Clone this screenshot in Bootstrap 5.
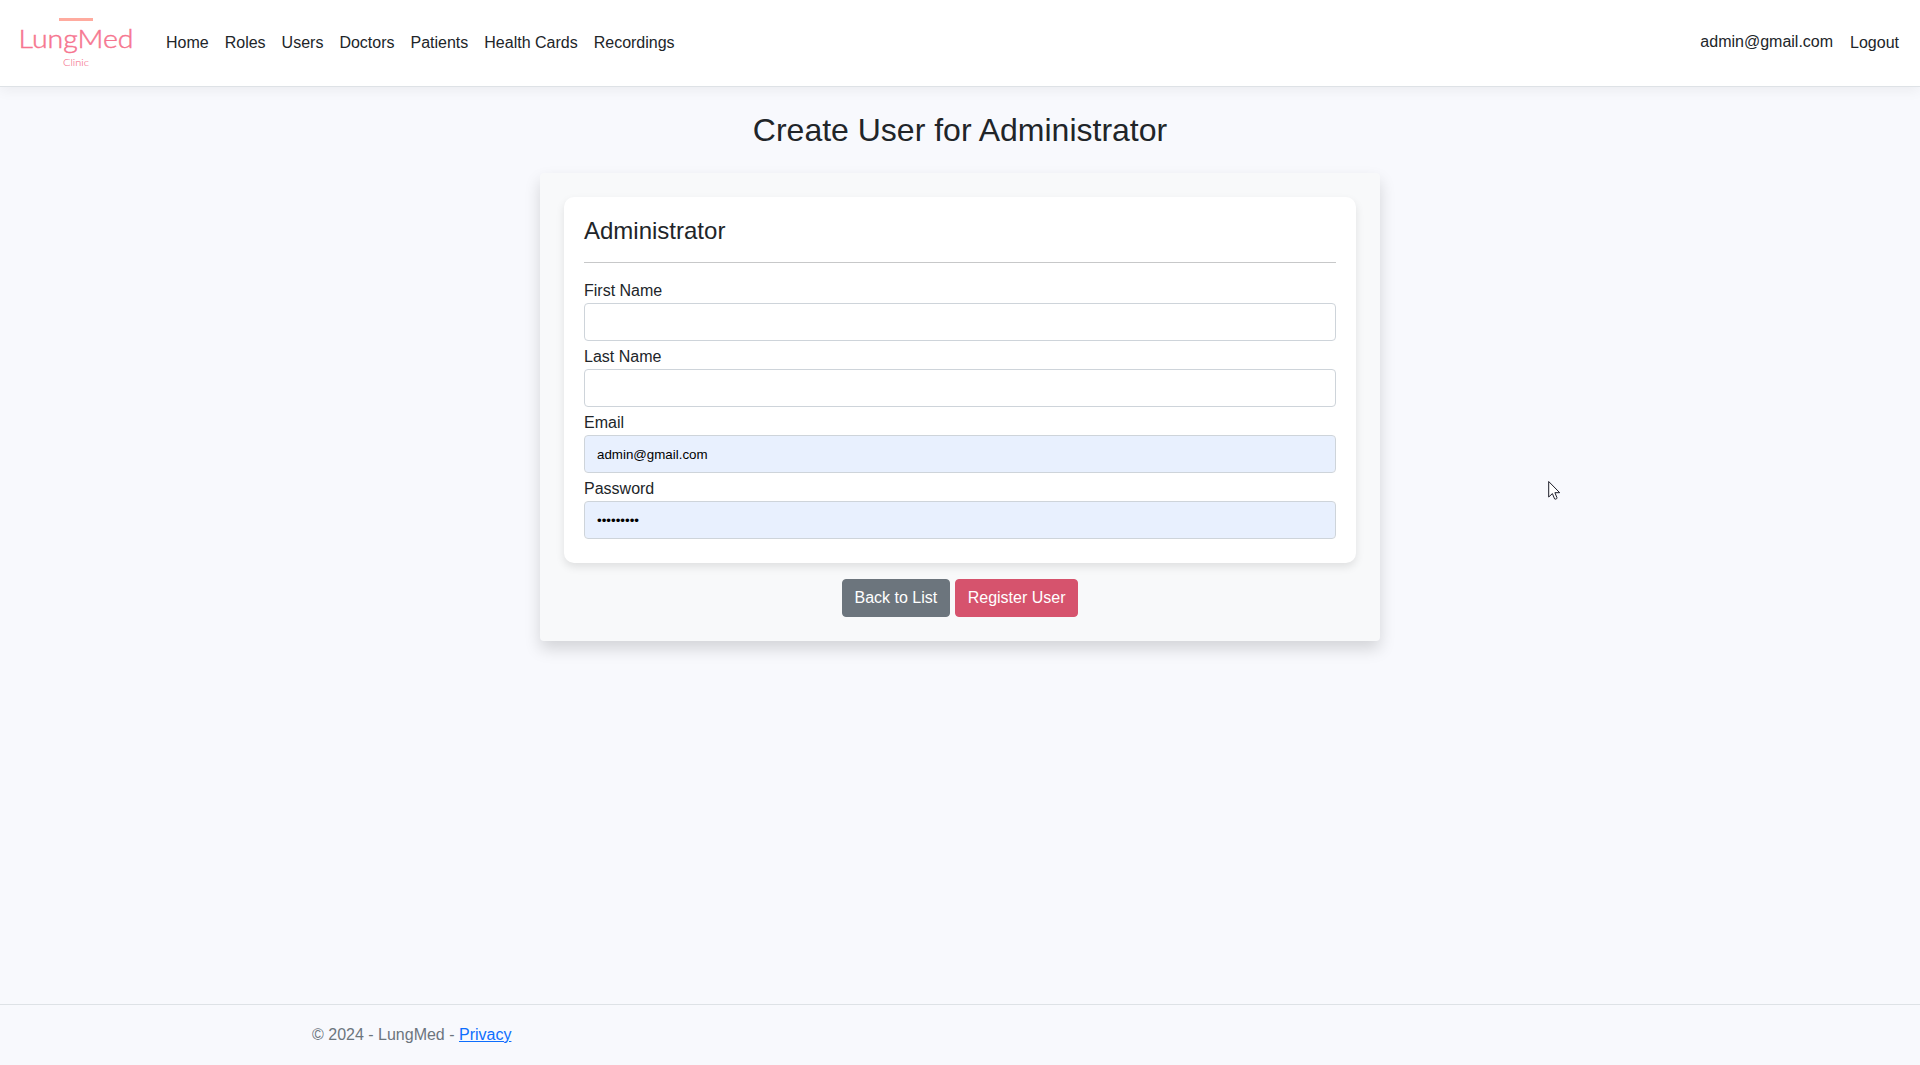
<!DOCTYPE html>
<html lang="en">
<head>
<meta charset="utf-8">
<meta name="viewport" content="width=device-width, initial-scale=1">
<title>Create User - LungMed</title>
<link href="https://cdn.jsdelivr.net/npm/bootstrap@5.3.0/dist/css/bootstrap.min.css" rel="stylesheet">
<style>
  body { font-family: "Liberation Sans", Arial, sans-serif; background-color: #f8f9fd; color: #212529; }
  .site-nav { box-shadow: 0 .25rem .75rem rgba(0, 0, 0, .05); }
  .site-nav .nav-link { color: #212529; }
  .brand-logo { display: block; width: 130px; height: 60px; }
  .brand-logo text { font-family: Lato, sans-serif; font-weight: 300; fill: #f6758f; stroke: #f6758f; }
  .user-panel { width: 840px; background-color: #f8f9fa; border-radius: .25rem; box-shadow: 0 .5rem 1rem rgba(0, 0, 0, .15); }
  .form-panel { padding: 20px 20px 24px; background-color: #fff; border-radius: 10px; box-shadow: 0 4px 8px rgba(0, 0, 0, .1); }
  .form-panel hr { height: 1px; border: 0; background-color: currentColor; opacity: .25; }
  .form-panel .form-control { height: 38px; border-color: #ced4da; border-radius: .25rem; }
  .form-panel .autofilled { background-color: #e8f0fe; color: #000; font-size: 13.333px; }
  .user-panel .btn { border-radius: .25rem; }
  .btn-register { background-color: #d6536d; border-color: #d6536d; color: #fff; }
  .site-footer { line-height: 60px; color: #6c757d; }
  .site-footer a { color: #0d6efd; }
  .pointer-arrow { position: absolute; left: 1548px; top: 480px; width: 13px; height: 21px; }
</style>
<script src="https://cdn.jsdelivr.net/npm/bootstrap@5.3.0/dist/js/bootstrap.bundle.min.js"></script>
</head>
<body class="d-flex flex-column min-vh-100">
<header>
  <nav class="navbar navbar-expand-sm bg-white border-bottom mb-3 site-nav">
    <div class="container-fluid">
      <a class="navbar-brand" href="#">
        <svg class="brand-logo" viewBox="0 0 130 60" role="img" aria-label="LungMed Clinic">
          <rect x="47" y="5" width="34" height="3" fill="#ffab9f"/>
          <text x="6.5" y="35.3" font-size="25" textLength="115" lengthAdjust="spacingAndGlyphs" stroke-width=".45">LungMed</text>
          <text x="51" y="53.3" font-size="9.5" textLength="26" lengthAdjust="spacingAndGlyphs" stroke-width=".1">Clinic</text>
        </svg>
      </a>
      <div class="navbar-collapse d-flex justify-content-between">
        <ul class="navbar-nav">
          <li class="nav-item"><a class="nav-link" href="#">Home</a></li>
          <li class="nav-item"><a class="nav-link" href="#">Roles</a></li>
          <li class="nav-item"><a class="nav-link" href="#">Users</a></li>
          <li class="nav-item"><a class="nav-link" href="#">Doctors</a></li>
          <li class="nav-item"><a class="nav-link" href="#">Patients</a></li>
          <li class="nav-item"><a class="nav-link" href="#">Health Cards</a></li>
          <li class="nav-item"><a class="nav-link" href="#">Recordings</a></li>
        </ul>
        <ul class="navbar-nav">
          <li class="nav-item"><a class="nav-link" href="#">admin@gmail.com</a></li>
          <li class="nav-item"><button type="button" class="nav-link btn border border-white">Logout</button></li>
        </ul>
      </div>
    </div>
  </nav>
</header>
<main class="container flex-grow-1 pt-2">
  <h2 class="text-center mb-4">Create User for Administrator</h2>
  <form class="user-panel mx-auto p-4">
    <div class="form-panel mb-3">
      <h4>Administrator</h4>
      <hr>
      <div class="mb-1"><label class="d-block" for="first">First Name</label><input id="first" type="text" class="form-control"></div>
      <div class="mb-1"><label class="d-block" for="last">Last Name</label><input id="last" type="text" class="form-control"></div>
      <div class="mb-1"><label class="d-block" for="email">Email</label><input id="email" type="email" class="form-control autofilled" value="admin@gmail.com"></div>
      <div><label class="d-block" for="pass">Password</label><input id="pass" type="password" class="form-control autofilled" value="password1"></div>
    </div>
    <div class="text-center">
      <a class="btn btn-secondary" href="#">Back to List</a>
      <button type="button" class="btn btn-register">Register User</button>
    </div>
  </form>
</main>
<footer class="border-top site-footer">
  <div class="container">&copy; 2024 - LungMed - <a href="#">Privacy</a></div>
</footer>
<svg class="pointer-arrow" viewBox="0 0 13 21" aria-hidden="true">
  <path d="M.7 1.5V17l3.7-3.4 2.2 5.3c.3.7 2.8-.1 2.4-1.1L6.9 12.7h4.8z" fill="#fff" stroke="#1c1c28" stroke-width="1"/>
</svg>
</body>
</html>
